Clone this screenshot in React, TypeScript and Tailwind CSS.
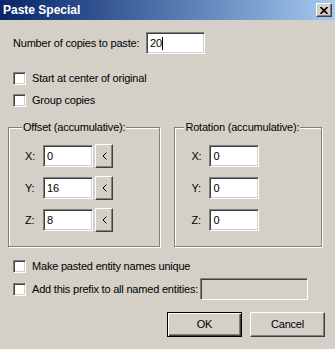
import { ReactNode } from 'react';

const sunken =
    'border border-t-[#808080] border-l-[#808080] border-b-white border-r-white shadow-[inset_1px_1px_0_#404040,inset_-1px_-1px_0_#d4d0c8]';
const raised =
    'border border-t-white border-l-white border-b-[#404040] border-r-[#404040] shadow-[inset_-1px_-1px_0_#808080]';

const Checkbox = ({ label, className = '' }: { label: string; className?: string }) => (
    <div className={`flex items-center h-[13px] ${className}`}>
        <div className={`w-[13px] h-[13px] bg-white ${sunken}`} />
        <span className="ml-[6px] leading-[13px]">{label}</span>
    </div>
);

const Field = ({ value, className = '', caret = false }: { value: string; className?: string; caret?: boolean }) => (
    <div className={`h-[22px] bg-white flex items-center pl-[3px] ${sunken} ${className}`}>
        <span>{value}</span>
        {caret && <span className="w-px h-[13px] bg-black" />}
    </div>
);

const Group = ({ title, width, legendMl, children }: { title: string; width: string; legendMl: string; children: ReactNode }) => (
    <fieldset className={`${width} h-[126px] border border-[#808080] shadow-[1px_1px_0_#fff,inset_1px_1px_0_#fff] p-0 m-0`}>
        <legend className={`px-[1px] ${legendMl} bg-[#d4d0c8] leading-[13px]`}>{title}</legend>
        <div className="flex flex-col gap-[10px] mt-[11px] pl-[16px]">{children}</div>
    </fieldset>
);

const Row = ({ axis, value, withButton }: { axis: string; value: string; withButton?: boolean }) => (
    <div className="flex items-center h-[22px]">
        <span className="w-[18px]">{axis}:</span>
        <Field value={value} className="w-[50px]" />
        {withButton && (
            <div className={`ml-[2px] w-[18px] h-[24px] bg-[#d4d0c8] flex items-center justify-center ${raised}`}>
                <svg width="5" height="8" viewBox="0 0 5 8">
                    <path d="M4.5 0.5 L1 4 L4.5 7.5" stroke="#000" strokeWidth="1" fill="none" />
                </svg>
            </div>
        )}
    </div>
);

export default function App() {
    return (
        <div className="w-[335px] h-[349px] bg-[#d4d0c8] flex flex-col text-[11px] tracking-[-0.2px] text-black font-['Liberation_Sans',Arial,sans-serif]">
            <div className="h-[20px] bg-linear-to-r from-[#0a246a] to-[#a6caf0] flex items-center justify-between pl-[3px] pr-[3px]">
                <span className="text-white font-bold text-[12px] tracking-normal">Paste Special</span>
                <div className={`w-[16px] h-[14px] bg-[#d4d0c8] flex items-center justify-center ${raised}`}>
                    <svg width="8" height="7" viewBox="0 0 8 7">
                        <path d="M0.5 0 L7.5 7 M7.5 0 L0.5 7" stroke="#000" strokeWidth="1.6" />
                    </svg>
                </div>
            </div>

            <div className="px-[13px] pt-[12px]">
                <div className="flex items-center h-[22px]">
                    <span className="w-[133px]">Number of copies to paste:</span>
                    <Field value="20" caret className="w-[59px]" />
                </div>

                <Checkbox label="Start at center of original" className="mt-[18px]" />
                <Checkbox label="Group copies" className="mt-[9px]" />

                <div className="flex gap-[14px] ml-[-5px] mt-[14px]">
                    <Group title="Offset (accumulative):" width="w-[156px]" legendMl="ml-[13px]">
                        <Row axis="X" value="0" withButton />
                        <Row axis="Y" value="16" withButton />
                        <Row axis="Z" value="8" withButton />
                    </Group>
                    <Group title="Rotation (accumulative):" width="w-[151px]" legendMl="ml-[9px]">
                        <Row axis="X" value="0" />
                        <Row axis="Y" value="0" />
                        <Row axis="Z" value="0" />
                    </Group>
                </div>

                <Checkbox label="Make pasted entity names unique" className="mt-[13px]" />
                <div className="flex items-center mt-[5px] h-[22px]">
                    <Checkbox label="Add this prefix to all named entities:" />
                    <div className={`ml-[2px] w-[108px] h-[22px] bg-[#d4d0c8] ${sunken}`} />
                </div>

                <div className="flex justify-end gap-[8px] mt-[12px] mr-[-3px]">
                    <button className="w-[75px] h-[25px] bg-[#d4d0c8] border border-black shadow-[inset_1px_1px_0_#fff,inset_-1px_-1px_0_#404040,inset_-2px_-2px_0_#808080]">
                        OK
                    </button>
                    <button className={`w-[75px] h-[25px] bg-[#d4d0c8] ${raised}`}>Cancel</button>
                </div>
            </div>
        </div>
    );
}
